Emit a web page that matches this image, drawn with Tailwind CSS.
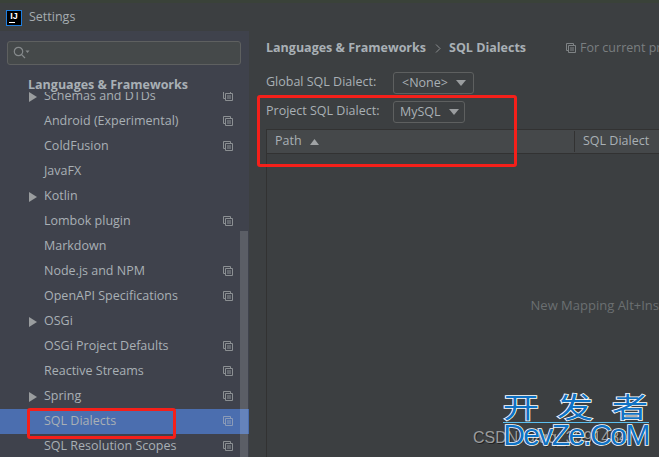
<!DOCTYPE html>
<html><head><meta charset="utf-8"><script src="https://cdn.jsdelivr.net/npm/@tailwindcss/browser@4"></script></head>
<body class="m-0">
<div class="relative w-[659px] h-[457px] overflow-hidden bg-[#3c3f41] flex flex-col font-['Open_Sans','Noto_Sans',sans-serif] text-[12.5px] text-[#a9b0b5]">
  <div class="h-[3px] shrink-0 bg-[#3a4239]"></div>
  <div class="h-[28px] shrink-0 flex items-center pl-[6px] gap-[7px] bg-[#3c3f41] pt-[1px]">
    <div class="w-[16px] h-[16px] bg-black border border-[#1e7fe0] flex flex-col items-center relative">
      <span class="font-['Liberation_Sans'] font-bold text-[9px] leading-[10px] text-white">IJ</span>
      <span class="absolute left-[2px] bottom-[2px] w-[6px] h-[1px] bg-white"></span>
    </div>
    <span class="text-[12.5px] text-[#a5acb0]">Settings</span>
  </div>
  <div class="flex flex-1 min-h-0">
    <aside class="w-[249px] shrink-0 bg-[#3f424c] relative flex flex-col overflow-hidden">
      <div class="ml-[7px] mr-[8px] mt-[10px] h-[24px] shrink-0 border border-[#5e6060] rounded-[3px] bg-[#45494a] flex items-center pl-[5px]">
        <svg width="17" height="14" viewBox="0 0 17 14" fill="none" stroke="#868a8c" stroke-width="1.2"><circle cx="5.500" cy="5.500" r="4.200"/><path d="M8.600 8.600L12 12"/><path d="M12.500 4.500h4l-2 2.400z" fill="#868a8c" stroke="none"/></svg>
      </div>
      <div class="h-[27px] shrink-0 pl-[28px] flex items-end relative z-10 bg-[#3f424c] font-bold text-[12.5px] leading-[14px] text-[#a9b0b5]">Languages &amp; Frameworks</div>
      <div class="flex flex-col -mt-[8px]">
        <div class="h-[25px] flex items-center pl-[44px] relative"><svg class="absolute left-[29px] top-[8px]" width="9" height="10" viewBox="0 0 9 10"><path d="M0 0l8 5-8 5z" fill="#9a9d9f"/></svg>Schemas and DTDs<svg class="absolute left-[223px] top-[7px]" width="10" height="10" viewBox="0 0 10 10" fill="none" stroke="#8b8f92"><path d="M7.500 2V.5h-7v7H2M2.500 2.500h7v7h-7zM4 5h4M4 7h4"/></svg></div>
        <div class="h-[25px] flex items-center pl-[44px] relative">Android (Experimental)<svg class="absolute left-[223px] top-[7px]" width="10" height="10" viewBox="0 0 10 10" fill="none" stroke="#8b8f92"><path d="M7.500 2V.5h-7v7H2M2.500 2.500h7v7h-7zM4 5h4M4 7h4"/></svg></div>
        <div class="h-[25px] flex items-center pl-[44px] relative">ColdFusion<svg class="absolute left-[223px] top-[7px]" width="10" height="10" viewBox="0 0 10 10" fill="none" stroke="#8b8f92"><path d="M7.500 2V.5h-7v7H2M2.500 2.500h7v7h-7zM4 5h4M4 7h4"/></svg></div>
        <div class="h-[25px] flex items-center pl-[44px] relative">JavaFX</div>
        <div class="h-[25px] flex items-center pl-[44px] relative"><svg class="absolute left-[29px] top-[8px]" width="9" height="10" viewBox="0 0 9 10"><path d="M0 0l8 5-8 5z" fill="#9a9d9f"/></svg>Kotlin</div>
        <div class="h-[25px] flex items-center pl-[44px] relative">Lombok plugin<svg class="absolute left-[223px] top-[7px]" width="10" height="10" viewBox="0 0 10 10" fill="none" stroke="#8b8f92"><path d="M7.500 2V.5h-7v7H2M2.500 2.500h7v7h-7zM4 5h4M4 7h4"/></svg></div>
        <div class="h-[25px] flex items-center pl-[44px] relative">Markdown</div>
        <div class="h-[25px] flex items-center pl-[44px] relative">Node.js and NPM<svg class="absolute left-[223px] top-[7px]" width="10" height="10" viewBox="0 0 10 10" fill="none" stroke="#8b8f92"><path d="M7.500 2V.5h-7v7H2M2.500 2.500h7v7h-7zM4 5h4M4 7h4"/></svg></div>
        <div class="h-[25px] flex items-center pl-[44px] relative">OpenAPI Specifications<svg class="absolute left-[223px] top-[7px]" width="10" height="10" viewBox="0 0 10 10" fill="none" stroke="#8b8f92"><path d="M7.500 2V.5h-7v7H2M2.500 2.500h7v7h-7zM4 5h4M4 7h4"/></svg></div>
        <div class="h-[25px] flex items-center pl-[44px] relative"><svg class="absolute left-[29px] top-[8px]" width="9" height="10" viewBox="0 0 9 10"><path d="M0 0l8 5-8 5z" fill="#9a9d9f"/></svg>OSGi</div>
        <div class="h-[25px] flex items-center pl-[44px] relative">OSGi Project Defaults<svg class="absolute left-[223px] top-[7px]" width="10" height="10" viewBox="0 0 10 10" fill="none" stroke="#8b8f92"><path d="M7.500 2V.5h-7v7H2M2.500 2.500h7v7h-7zM4 5h4M4 7h4"/></svg></div>
        <div class="h-[25px] flex items-center pl-[44px] relative">Reactive Streams<svg class="absolute left-[223px] top-[7px]" width="10" height="10" viewBox="0 0 10 10" fill="none" stroke="#8b8f92"><path d="M7.500 2V.5h-7v7H2M2.500 2.500h7v7h-7zM4 5h4M4 7h4"/></svg></div>
        <div class="h-[25px] flex items-center pl-[44px] relative"><svg class="absolute left-[29px] top-[8px]" width="9" height="10" viewBox="0 0 9 10"><path d="M0 0l8 5-8 5z" fill="#9a9d9f"/></svg>Spring<svg class="absolute left-[223px] top-[7px]" width="10" height="10" viewBox="0 0 10 10" fill="none" stroke="#8b8f92"><path d="M7.500 2V.5h-7v7H2M2.500 2.500h7v7h-7zM4 5h4M4 7h4"/></svg></div>
        <div class="h-[25px] flex items-center pl-[44px] relative bg-[#4b6eaf]">SQL Dialects<svg class="absolute left-[223px] top-[7px]" width="10" height="10" viewBox="0 0 10 10" fill="none" stroke="#8b9bb8"><path d="M7.500 2V.5h-7v7H2M2.500 2.500h7v7h-7zM4 5h4M4 7h4"/></svg></div>
        <div class="h-[25px] flex items-center pl-[44px] relative">SQL Resolution Scopes<svg class="absolute left-[223px] top-[7px]" width="10" height="10" viewBox="0 0 10 10" fill="none" stroke="#8b8f92"><path d="M7.500 2V.5h-7v7H2M2.500 2.500h7v7h-7zM4 5h4M4 7h4"/></svg></div>
      </div>
      <div class="absolute left-[240px] top-[200px] bottom-0 w-[8px] bg-white/15"></div>
    </aside>
    <main class="flex-1 min-w-0 flex flex-col pl-[17px] overflow-hidden">
      <div class="flex items-center h-[20px] mt-[7px] whitespace-nowrap">
        <span class="font-bold text-[12.5px] shrink-0 text-[#a9b0b5]">Languages &amp; Frameworks</span>
        <svg class="ml-[9px] mr-[8px] shrink-0" width="6" height="9" viewBox="0 0 6 9" fill="none" stroke="#8a8e90"><path d="M1 .5l4 4-4 4"/></svg>
        <span class="font-bold text-[12.5px] shrink-0 text-[#a9b0b5]">SQL Dialects</span>
        <svg class="ml-[40px] shrink-0" width="10" height="10" viewBox="0 0 10 10" fill="none" stroke="#7f8385"><path d="M7.500 2V.5h-7v7H2M2.500 2.500h7v7h-7zM4 5h4M4 7h4"/></svg>
        <span class="ml-[4px] text-[#7a7e80]">For current project</span>
      </div>
      <div class="flex items-center mt-[14px] h-[22px]">
        <span class="w-[127px] shrink-0 pb-[2px]">Global SQL Dialect:</span>
        <div class="h-[22px] w-[81px] border border-[#5e6060] rounded-[3px] flex items-center pl-[8px] gap-[8px]">&lt;None&gt;<svg width="10" height="6" viewBox="0 0 10 6"><path d="M0 0h10L5 6z" fill="#9a9d9f"/></svg></div>
      </div>
      <div class="flex items-center mt-[7px] h-[22px]">
        <span class="w-[127px] shrink-0 pb-[2px]">Project SQL Dialect:</span>
        <div class="h-[22px] w-[72px] border border-[#5e6060] rounded-[3px] flex items-center pl-[6px] gap-[8px]">MySQL<svg width="10" height="6" viewBox="0 0 10 6"><path d="M0 0h10L5 6z" fill="#9a9d9f"/></svg></div>
      </div>
      <div class="mt-[6px] h-[25px] shrink-0 flex bg-[#45484a] border-y border-[#323232] border-l">
        <div class="w-[307px] shrink-0 flex items-center pl-[8px] gap-[8px]">Path<svg width="9" height="6" viewBox="0 0 9 6"><path d="M0 6h9L4.500 0z" fill="#a0a3a5"/></svg></div>
        <div class="flex-1 border-l border-[#323232] my-[1px] pl-[8px] flex items-center whitespace-nowrap">SQL Dialect</div>
      </div>
      <div class="flex-1 border-l border-[#323232] flex items-start justify-end pt-[142px]"><span class="text-[13px] text-[#6b6f71] whitespace-nowrap">New Mapping Alt+Ins</span></div>
    </main>
  </div>

  <div class="absolute left-[257px] top-[95px] w-[260px] h-[72px] border-[3px] border-[#f5201a] rounded-[3px]"></div>
  <div class="absolute left-[27px] top-[408px] w-[149px] h-[31px] border-[3px] border-[#f5201a] rounded-[3px]"></div>

  <div class="absolute left-[473px] top-[428px] text-[16px] leading-[20px] text-[#9a9c9d] whitespace-nowrap font-['Liberation_Sans'] [text-shadow:1px_1px_0_#222]">CSDN @qq_3391484</div>
  <div class="absolute left-[507px] top-[388px] w-[137px] flex justify-between text-[28px] leading-[36px] text-[#0f72c4] font-['Noto_Sans_CJK_SC',sans-serif] [-webkit-text-stroke:1.5px_#fff] [paint-order:stroke_fill]"><span class="inline-block scale-x-[1.3]">开</span><span class="inline-block scale-x-[1.3]">发</span><span class="inline-block scale-x-[1.3]">者</span></div>
  <div class="absolute left-[503px] top-[422px] w-[146px] h-[1px] bg-[#5cc0f0]"></div>
  <div class="absolute left-[502px] top-[418px] w-[148px] flex justify-center text-[30px] tracking-[-1.6px] leading-[34px] text-[#0f72c4] whitespace-nowrap font-['Liberation_Sans'] [-webkit-text-stroke:1.5px_#fff] [paint-order:stroke_fill]">DevZe.CoM</div>
</div>
</body></html>
